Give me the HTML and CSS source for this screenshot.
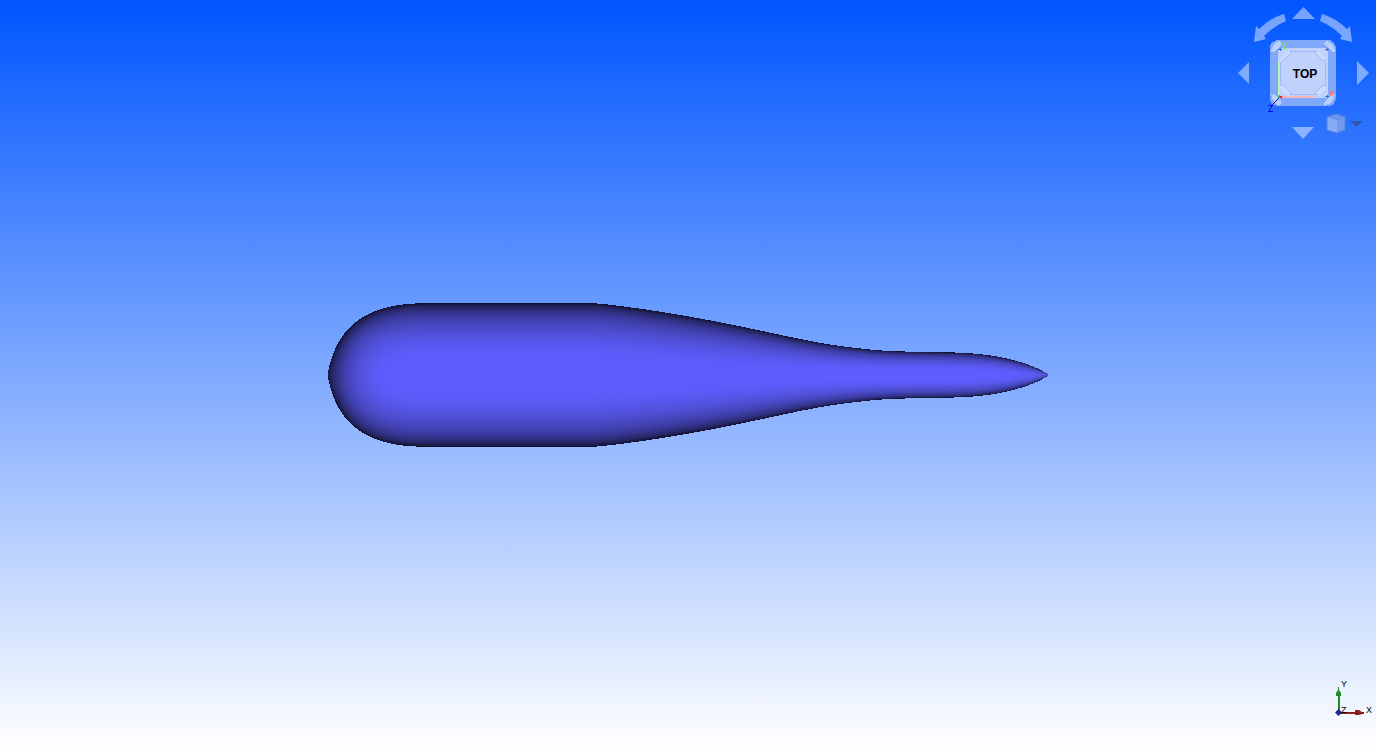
FILE: index.html
```html
<!DOCTYPE html>
<html lang="en">
<head>
<meta charset="utf-8">
<title>3D view</title>
<link rel="stylesheet" href="styles.css">
</head>
<body>
<main class="viewport">
  <svg class="model" viewBox="0 0 720 144" role="img" aria-label="Body of revolution" id="model"></svg>

  <nav class="navcube" aria-label="Navigation cube">
    <svg class="cube" viewBox="0 0 76 76" aria-hidden="true">
      <path class="edge" d="M13 4H61Q70 4 70 13V61Q70 70 61 70H13Q4 70 4 61V13Q4 4 13 4Z"/>
      <g class="corner">
        <path d="M5 14L8 8L13 5L16 7L15 9L8 16L5 16Z"/>
        <path d="M58 7L61 5L66 8L69 14V16L66 16L59 9Z"/>
        <path d="M5 59L8 58L15 65L16 68L12 69L8 66Z"/>
        <path d="M69 59L66 58L59 65L58 69L63 68L67 65Z"/>
      </g>
      <path class="face" d="M14 12H60L62 14V60L60 62H14L12 60V14Z"/>
      <path class="plate" d="M14 22L22 14L25 16L17 25L14 25ZM52 14L60 22V25H57L49 16ZM14 50L17 49L25 58L22 60L14 53ZM60 50L57 49L49 58L52 60L60 53Z"/>
      <path class="line" d="M23.500 15.500H50.500M59.500 25.500V48.500M50.500 58.500H23.500M14.500 48.500V25.500M15.500 24.500H17.500L24.500 17.500V15.500M49.500 15.500V17.500L56.500 24.500H59.500M14.500 49.500H17.500L24.500 56.500V58.500M49.500 58.500V56.500L56.500 49.500H59.500"/>
      <path class="dot" d="M12 13.500h4M14 12v3M59 13.500h4M61 12v3M59 60.500h4M61 59v3"/>
      <path class="axis-y" d="M13 26V59"/>
      <path class="axis-x" d="M15 61H48"/>
      <path class="axis-z" d="M13 62L6 69"/>
      <path class="origin-green" d="M12 60.500h2M13.500 59v3"/>
      <path class="origin-red" d="M14 60.500h2M14 61.500h2"/>
      <path class="glyph-y" d="M16.500 7.500L18.500 10.500L20.500 7.500M18.500 10.500V14"/>
      <path class="glyph-x" d="M63.500 54.500L67.500 60.500M67.500 54.500L63.500 60.500"/>
      <path class="glyph-z" d="M2 69.500H6.500L2.500 75.500H7"/>
    </svg>
    <button class="top" type="button">TOP</button>
    <button class="nav up" type="button" aria-label="Rotate up"><svg viewBox="0 0 24 12"><path d="M1 12L12.500 0L24 12Z"/></svg></button>
    <button class="nav down" type="button" aria-label="Rotate down"><svg viewBox="0 0 24 12"><path d="M1 0H23L12 12Z"/></svg></button>
    <button class="nav left" type="button" aria-label="Rotate left"><svg viewBox="0 0 12 24"><path d="M11 1V23L0 12Z"/></svg></button>
    <button class="nav right" type="button" aria-label="Rotate right"><svg viewBox="0 0 12 24"><path d="M0 0V24L12 12Z"/></svg></button>
    <button class="nav ccw" type="button" aria-label="Roll counterclockwise"><svg viewBox="0 0 32 28"><path d="M30 0Q16 4 5 15L2 12L0 28L12 25L10 22Q20 12 32 7Z"/></svg></button>
    <button class="nav cw" type="button" aria-label="Roll clockwise"><svg viewBox="0 0 32 28"><path d="M2 0Q16 4 27 15L30 12L32 28L20 25L22 22Q12 12 0 7Z"/></svg></button>
    <button class="menu" type="button" aria-label="View menu">
      <svg viewBox="0 0 38 22">
        <path class="mini-top" d="M1 4L10 1L19 4L11 7Z"/>
        <path class="mini-left" d="M1 4L11 7V20L1 17Z"/>
        <path class="mini-right" d="M19 4L11 7V20L19 17Z"/>
        <path class="mini-outline" d="M1 4L10 1L19 4V17L11 20L1 17Z"/>
        <path class="caret" d="M24 8H37L30.500 14Z"/>
      </svg>
    </button>
  </nav>

  <svg class="axes" viewBox="0 0 50 50" role="img" aria-label="Axis directions">
    <path class="x-fill" d="M13 38H29V36H33L36 38H38V40H36L33 41H29V40H13Z"/>
    <path class="y-fill" d="M12 38V22H10V19L12 16V13H13V16L15 19V22H14V38Z"/>
    <path class="z-fill" d="M9 38.500L12.500 35L16 38.500L12.500 42Z"/>
    <text x="15" y="13">Y</text>
    <text x="40" y="39">X</text>
    <text x="15" y="39">Z</text>
  </svg>
</main>
<script src="model.js"></script>
</body>
</html>
```
FILE: styles.css
```css
body {
  margin: 0;
}

.viewport {
  position: relative;
  display: flex;
  align-items: center;
  justify-content: center;
  min-height: 100vh;
  overflow: hidden;
  background: linear-gradient(#0055ff, #ffffff);
  font-family: "Liberation Sans", Arial, sans-serif;
}

svg {
  display: block;
}

.model {
  width: 720px;
  max-width: 100%;
  overflow: visible;
  shape-rendering: crispEdges;
}

.navcube {
  position: absolute;
  top: 0;
  right: 0;
  width: 144px;
  height: 144px;
}

button {
  position: absolute;
  padding: 0;
  border: 0;
  background: none;
  cursor: pointer;
}

.nav svg {
  width: 100%;
  height: 100%;
  fill: rgba(255, 255, 255, 0.45);
}

.cube {
  position: absolute;
  left: 34px;
  top: 36px;
  width: 76px;
  height: 76px;
  shape-rendering: crispEdges;
}

.cube path {
  fill: none;
}

.cube .edge {
  fill: #80a9fa;
}

.cube .corner path {
  fill: #bad0fc;
}

.cube .face {
  fill: #c0d2fc;
}

.cube .plate {
  fill: #cbdafd;
}

.line {
  stroke: #9dbaf8;
}

.dot {
  stroke: #2f6df0;
}

.axis-y {
  stroke: #b4f8b0;
  stroke-width: 2;
}

.axis-x {
  stroke: #fbb4bc;
  stroke-width: 2;
}

.axis-z {
  stroke: #0808e0;
}

.origin-green {
  stroke: #10c020;
}

.origin-red {
  stroke: #f02030;
}

.glyph-y {
  stroke: #74ee50;
}

.glyph-x {
  stroke: #ff7474;
}

.glyph-z {
  stroke: #0808e0;
}

.top {
  left: 50px;
  top: 53px;
  width: 46px;
  height: 42px;
  color: #000000;
  font: bold 12px/42px "Liberation Sans", Arial, sans-serif;
  text-align: center;
}

.up {
  left: 59px;
  top: 7px;
  width: 24px;
  height: 12px;
}

.down {
  left: 59px;
  top: 127px;
  width: 24px;
  height: 12px;
}

.left {
  left: 6px;
  top: 61px;
  width: 12px;
  height: 24px;
}

.right {
  left: 125px;
  top: 61px;
  width: 12px;
  height: 24px;
}

.ccw {
  left: 22px;
  top: 14px;
  width: 32px;
  height: 28px;
}

.cw {
  left: 88px;
  top: 14px;
  width: 32px;
  height: 28px;
}

.menu {
  left: 94px;
  top: 113px;
  width: 38px;
  height: 22px;
}

.mini-top {
  fill: #6b96ee;
}

.mini-left {
  fill: #86acf8;
}

.mini-right {
  fill: #719aee;
}

.mini-outline {
  fill: none;
  stroke: #5683dc;
}

.caret {
  fill: #2d58b0;
}

.axes {
  position: absolute;
  right: 0;
  bottom: 26px;
  width: 50px;
  height: 50px;
  font-size: 9px;
}

.x-fill {
  fill: #8c2020;
}

.y-fill {
  fill: #208c20;
}

.z-fill {
  fill: #202090;
}
```
FILE: model.js
```js
// Shaded body of revolution: contour bands of equal surface brightness.
const CENTER = 72;
const samples = [];

// Rounded nose, a cubic curve from the tip to the cylinder.
for (let i = 0; i <= 60; i++) {
  const t = i / 60, u = 1 - t;
  const x = -0.5 + 24 * u * u * t + 108 * u * t * t + 97 * t ** 3;
  const r = 138 * u * u * t + 215.1 * u * t * t + 71.7 * t ** 3;
  const dx = 24 * u * u + 168 * u * t + 183 * t * t;
  const dr = 138 * u * u + 154.2 * u * t;
  samples.push([x, r, dr / dx]);
}

// Tapering tail: position, radius, slope.
const tail = [
  [266, 71.7, -0.07], [312, 66.3, -0.14], [352, 60, -0.17],
  [392, 52.7, -0.2], [432, 44.5, -0.21], [472, 36, -0.2],
  [499, 31, -0.16], [532, 26.6, -0.11], [559, 24.2, -0.05],
  [589, 23.2, -0.02], [632, 22.3, -0.04], [659, 20, -0.13],
  [685, 15, -0.27], [705, 8.5, -0.4], [721, 0, -0.7]
];
samples.push([265, 71.7, 0]);
for (let k = 0; k < tail.length - 1; k++) {
  const [x0, r0, m0] = tail[k], [x1, r1, m1] = tail[k + 1], h = x1 - x0;
  for (let i = 0; i <= 12; i++) {
    const t = i / 12;
    const r = (2 * t ** 3 - 3 * t * t + 1) * r0 + (t ** 3 - 2 * t * t + t) * h * m0
      + (3 * t * t - 2 * t ** 3) * r1 + (t ** 3 - t * t) * h * m1;
    samples.push([x0 + t * h, r, m0 + t * (m1 - m0)]);
  }
}

const BANDS = 80;
let markup = "";
for (let b = 0; b < BANDS; b++) {
  const n = b / BANDS;
  const upper = [], lower = [];
  for (const [x, r, m] of samples) {
    const y = r * Math.sqrt(Math.max(0, 1 - n * n * (1 + m * m)));
    upper.push(`${x.toFixed(2)},${(CENTER - y).toFixed(2)}`);
    lower.unshift(`${x.toFixed(2)},${(CENTER + y).toFixed(2)}`);
  }
  const shade = Math.min(1, 0.09 + 0.93 * (b + 0.5) / BANDS);
  const c = Math.round(94 * shade);
  markup += `<polygon points="${upper.concat(lower).join(" ")}" fill="rgb(${c},${c},${Math.round(255 * shade)})"/>`;
}
document.getElementById("model").innerHTML = markup;
```
